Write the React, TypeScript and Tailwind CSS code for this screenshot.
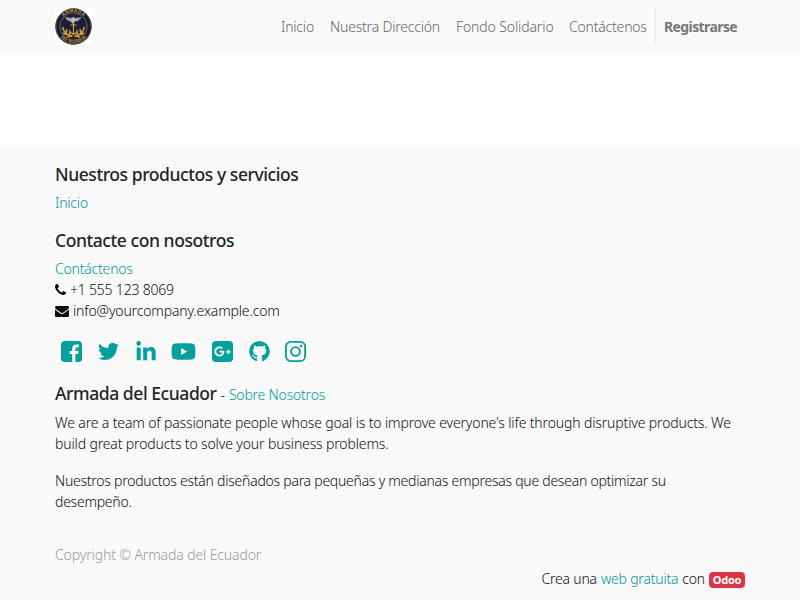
import type { ReactNode } from 'react';
import { FaTwitter, FaLinkedinIn, FaYoutube, FaGithub, FaGooglePlusG } from 'react-icons/fa';

function Crest() {
  return (
    <svg viewBox="0 0 37 37" className="h-[37px] w-[37px] bg-white">
      <circle cx="18.5" cy="18.5" r="18.2" fill="#181b35" />
      <circle cx="18.5" cy="18.5" r="17.5" fill="none" stroke="#75683f" strokeWidth=".7" />
      <circle cx="18.5" cy="18.5" r="13.7" fill="#1b1e3c" stroke="#8c7538" strokeWidth=".8" />
      <path id="crest-top" d="M6.5 11A14 14 0 0 1 30.5 11" fill="none" />
      <path id="crest-bottom" d="M3.5 26A17 17 0 0 0 33.5 26" fill="none" />
      <text fill="#c3a449" fontSize="4.6" fontWeight="700" textAnchor="middle" letterSpacing=".3" fontFamily="Liberation Sans, sans-serif"><textPath href="#crest-top" startOffset="50%">ARMADA</textPath></text>
      <text fill="#c9a338" fontSize="3.9" fontWeight="700" textAnchor="middle" letterSpacing="0" fontFamily="Liberation Sans, sans-serif"><textPath href="#crest-bottom" startOffset="50%">DEL ECUADOR</textPath></text>
      <path d="M10 9l6 1 2-1 3 1 6-1-4 4-4 1-1 2-2-2-4-2z" fill="#9ea4ad" />
      <path d="M16 11l2-1 2 1-1 3h-2z" fill="#d0c1bd" />
      <path d="M18.5 14v12M15.5 17h6M14.5 22q1 4 4 4t4-4" fill="none" stroke="#dda72d" strokeWidth="1.1" />
      <path d="M7.5 19q2 8 10 9M29.5 19q-2 8-10 9M9 23l-1-3M11 26l1-5M14 28l1-4M28 23l1-3M26 26l-1-5M23 28l-1-4M8 25l4 2M29 25l-4 2M12 29l5-1M25 29l-5-1" fill="none" stroke="#d49b2e" strokeWidth="1.5" />
    </svg>
  );
}

function PhoneIcon() {
  return (
    <svg viewBox="0 0 1408 1792" fill="currentColor" className="h-[14px] w-[11px]">
      <path transform="translate(-192 0)" d="M1600 1240q0 27-10 70.5t-21 68.5q-21 50-122 106-94 51-186 51-27 0-53-3.5t-57.5-12.5-47-14.5-55.5-20.5-49-18q-98-35-175-83-127-79-264-216t-216-264q-48-77-83-175-3-9-18-49t-20.5-55.5-14.5-47-12.5-57.5-3.5-53q0-92 51-186 56-101 106-122 25-11 68.5-21t70.5-10q14 0 21 3 18 6 53 76 11 19 30 54t35 63.5 31 53.5q3 4 17.5 25t21.5 35.5 7 28.5q0 20-28.5 50t-62 55-62 53-28.5 46q0 9 5 22.5t8.5 20.5 14 24 11.5 19q76 137 174 235t235 174q2 1 19 11.5t24 14 20.5 8.5 22.5 5q18 0 46-28.5t53-62 55-62 50-28.5q14 0 28.5 7t35.5 21.5 25 17.5q25 15 53.5 31t63.5 35 54 30q70 35 76 53 3 7 3 21z" />
    </svg>
  );
}

function EnvelopeIcon() {
  return (
    <svg viewBox="0 0 1792 1792" fill="currentColor" className="h-[14px] w-[14px]">
      <path d="M1792 710v794q0 66-47 113t-113 47h-1472q-66 0-113-47t-47-113v-794q44 49 101 87 362 246 497 345 57 42 92.5 65.5t94.5 48 110 24.5h2q51 0 110-24.5t94.5-48 92.5-65.5q170-123 498-345 57-39 100-87zm0-294q0 79-49 151t-122 123q-376 261-468 325-10 7-42.5 31t-54 38.5-52 32.5-57.5 27-50 9h-2q-23 0-50-9t-57.5-27-52-32.5-54-38.5-42.5-31q-91-64-262-182.5t-205-142.5q-62-42-117-115.5t-55-136.5q0-78 41.5-130t118.5-52h1472q65 0 112.5 47t47.5 113z" />
    </svg>
  );
}

function FacebookIcon() {
  return (
    <svg viewBox="0 0 21 21" className="h-[21px] w-[21px]">
      <rect width="21" height="21" rx="3.8" fill="currentColor" />
      <path d="M11.2 21v-8H8.6V9.9h2.6V7.7c0-2.8 1.6-4.3 4.1-4.3 1.2 0 2.2.1 2.5.2v2.8H16c-1.3 0-1.6.6-1.6 1.6v1.9h3.1L17.1 13h-2.7v8z" fill="#f9f9f9" />
    </svg>
  );
}

function InstagramIcon() {
  return (
    <svg viewBox="0 0 21 21" fill="none" stroke="currentColor" className="h-[21px] w-[21px]">
      <rect x=".9" y=".9" width="19.2" height="19.2" rx="4.8" strokeWidth="1.8" />
      <circle cx="10.5" cy="10.5" r="4.4" strokeWidth="1.9" />
      <circle cx="16" cy="5" r="1.25" fill="currentColor" stroke="none" />
    </svg>
  );
}

function Heading({ children }: { children: ReactNode }) {
  return <h4 className="h-[22px] text-[17.5px] leading-[22px] font-medium tracking-[-0.43px] text-[#212529]">{children}</h4>;
}

export default function App() {
  return (
    <div className="h-[600px] w-[800px] overflow-hidden bg-white font-['Noto_Sans','Open_Sans',sans-serif] text-sm leading-[21px] font-light tracking-[-0.2px] whitespace-nowrap text-[#0c0f12]">
      <header className="flex h-[53px] bg-[#f9f9f9] pt-2 pl-[55px]">
        <Crest />
        <nav className="ml-[189px] flex h-[37px] items-center text-[#666]">
          <a className="w-[49px]">Inicio</a>
          <a className="w-[126px]">Nuestra Dirección</a>
          <a className="w-[113px] tracking-[-0.12px]">Fondo Solidario</a>
          <a className="w-[86px]">Contáctenos</a>
          <a className="flex h-[37px] items-center border-l border-[#e9e9e9] pl-2 font-bold tracking-[-0.6px] text-[#777]">Registrarse</a>
        </nav>
      </header>
      <main className="h-[93px]" />
      <footer className="h-[454px] bg-[#f9f9f9] px-[55px] pt-[17px]">
        <Heading>Nuestros productos y servicios</Heading>
        <a className="mt-[7px] block h-[21px] text-[#009895]">Inicio</a>
        <div className="pt-4"><Heading>Contacte con nosotros</Heading></div>
        <a className="mt-[7px] block h-[21px] text-[#009895]">Contáctenos</a>
        <div className="flex h-[21px] items-center gap-1"><PhoneIcon /><span>+1 555 123 8069</span></div>
        <div className="flex h-[21px] items-center gap-1"><EnvelopeIcon /><span className="tracking-[-0.15px]">info@yourcompany.example.com</span></div>
        <div className="mt-[19px] flex h-[22px] items-center pl-[6px] text-[#00a09d]">
          <div className="w-[37px]"><FacebookIcon /></div>
          <div className="w-[37px]"><FaTwitter size={21} /></div>
          <div className="w-[36px] pt-0.5"><FaLinkedinIn size={22} /></div>
          <div className="w-[41px]"><FaYoutube size={25} /></div>
          <div className="mr-4 flex h-[21px] w-[21px] items-center justify-center rounded-[4px] bg-[#00a09d] text-[#f9f9f9]"><FaGooglePlusG size={17} /></div>
          <div className="w-[36px]"><FaGithub size={21} /></div>
          <InstagramIcon />
        </div>
        <div className="mt-5 flex h-[22px] items-baseline gap-1">
          <Heading>Armada del Ecuador</Heading>
          <span>-</span>
          <a className="text-[#009895]">Sobre Nosotros</a>
        </div>
        <p className="mt-2 tracking-[-0.14px]">We are a team of passionate people whose goal is to improve everyone's life through disruptive products. We<br />build great products to solve your business problems.</p>
        <p className="mt-4 tracking-[-0.25px]">Nuestros productos están diseñados para pequeñas y medianas empresas que desean optimizar su<br />desempeño.</p>
        <div className="mt-8 tracking-[-0.12px] text-[#999]">Copyright © Armada del Ecuador</div>
        <div className="mt-[3px] flex items-center justify-end gap-1">
          <span>Crea una</span>
          <a className="text-[#009895]">web gratuita</a>
          <span>con</span>
          <span className="mt-0.5 flex h-4 w-9 items-center justify-center rounded bg-[#dc3545] text-[11px] leading-none font-bold text-white">Odoo</span>
        </div>
      </footer>
    </div>
  );
}
